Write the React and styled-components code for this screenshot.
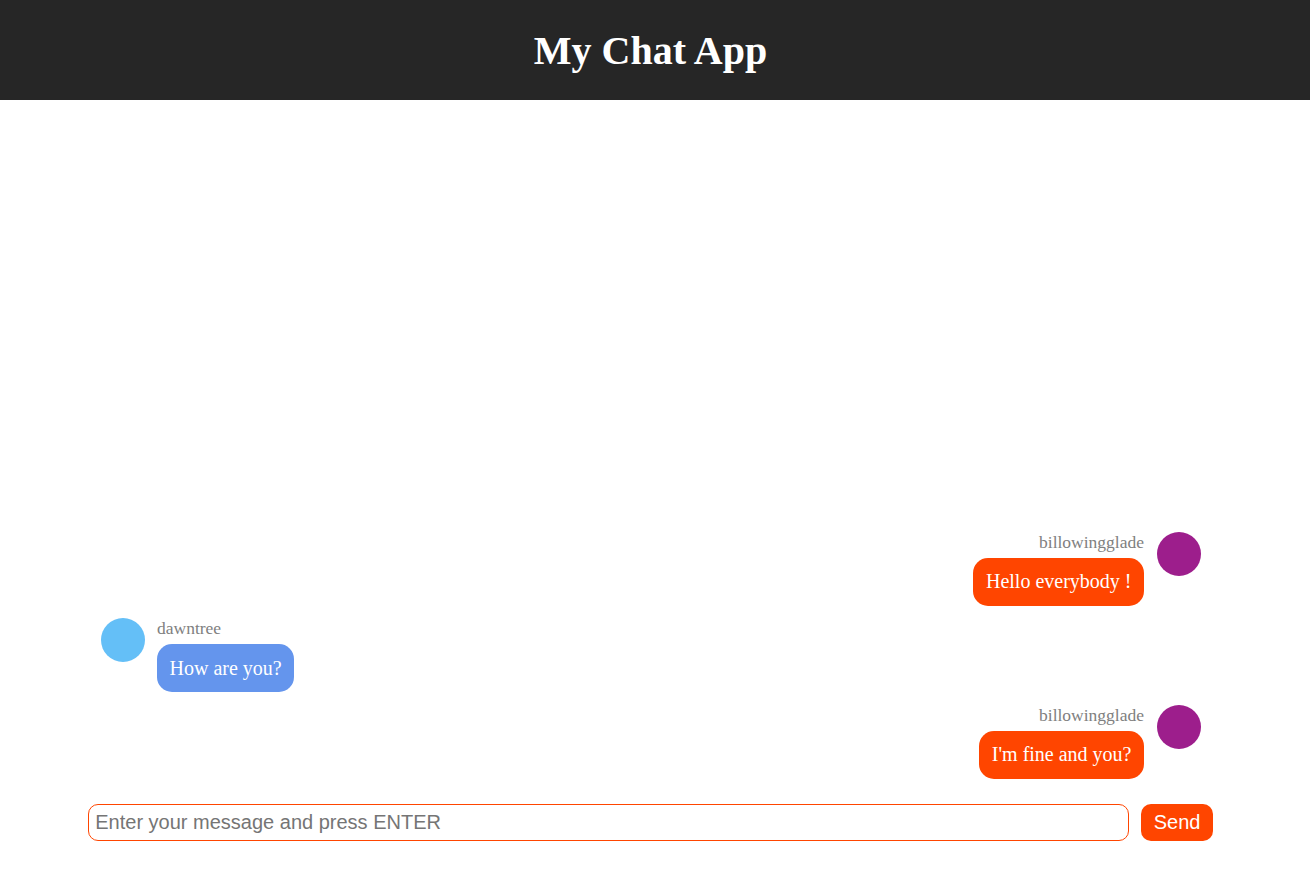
import React, { useState } from 'react';
import styled, { createGlobalStyle } from 'styled-components';

const GlobalStyle = createGlobalStyle`
  body {
    margin: 0;
    font-family: "Liberation Serif", "Times New Roman", serif;
    font-size: 20px;
  }
`;

const initialMessages = [
  { id: 1, member: { username: 'billowingglade', color: '#9d1e8c' }, text: 'Hello everybody !', mine: true },
  { id: 2, member: { username: 'dawntree', color: '#64bff7' }, text: 'How are you?', mine: false },
  { id: 3, member: { username: 'billowingglade', color: '#9d1e8c' }, text: "I'm fine and you?", mine: true },
];

const App = () => {
  const [messages, setMessages] = useState(initialMessages);
  const [text, setText] = useState('');

  const onSubmit = (e) => {
    e.preventDefault();
    if (!text) return;
    setMessages([
      ...messages,
      { id: messages.length + 1, member: { username: 'billowingglade', color: '#9d1e8c' }, text, mine: true },
    ]);
    setText('');
  };

  return (
    <Page>
      <GlobalStyle />
      <Header>
        <Title>My Chat App</Title>
      </Header>

      <Main>
        <MessagesList>
          {messages.map((m) => (
            <Message key={m.id} mine={m.mine}>
              <Avatar color={m.member.color} />
              <Content>
                <Username>{m.member.username}</Username>
                <Bubble mine={m.mine}>{m.text}</Bubble>
              </Content>
            </Message>
          ))}
        </MessagesList>

        <Form onSubmit={onSubmit}>
          <Input
            type="text"
            placeholder="Enter your message and press ENTER"
            value={text}
            onChange={(e) => setText(e.target.value)}
          />
          <SendButton type="submit">Send</SendButton>
        </Form>
      </Main>
    </Page>
  );
};

const Page = styled.div`
  display: flex;
  flex-direction: column;
  height: 100vh;
`;

const Header = styled.header`
  background-color: #262626;
  height: 100px;
  flex-shrink: 0;
  display: flex;
  align-items: center;
  justify-content: center;
  padding-right: 9px;
  color: white;
`;

const Title = styled.h1`
  margin: 0;
  font-size: 40px;
  font-weight: bold;
`;

const Main = styled.main`
  flex-grow: 1;
  min-height: 0;
  display: flex;
  flex-direction: column;
  padding-right: 9px;
`;

const MessagesList = styled.ul`
  list-style: none;
  margin: 0 auto;
  padding: 25px 0;
  max-width: 1125px;
  width: 100%;
  flex-grow: 1;
  overflow: auto;
  display: flex;
  flex-direction: column;
  justify-content: flex-end;
  box-sizing: border-box;
`;

const Message = styled.li.withConfig({ shouldForwardProp: (p) => p !== 'mine' })`
  display: flex;
  margin-top: 12.5px;
  flex-direction: ${(p) => (p.mine ? 'row-reverse' : 'row')};
  text-align: ${(p) => (p.mine ? 'right' : 'left')};
`;

const Avatar = styled.span`
  height: 44px;
  width: 44px;
  border-radius: 50%;
  display: inline-block;
  margin: 0 12.5px -12.5px;
  background-color: ${(p) => p.color};
  flex-shrink: 0;
`;

const Content = styled.div`
  display: inline-block;
`;

const Username = styled.span`
  display: block;
  color: gray;
  font-size: 17.5px;
  padding-bottom: 5px;
`;

const Bubble = styled.p.withConfig({ shouldForwardProp: (p) => p !== 'mine' })`
  display: inline-block;
  margin: 0;
  padding: 12.5px;
  max-width: 500px;
  border-radius: 15px;
  color: white;
  background-color: ${(p) => (p.mine ? 'orangered' : 'cornflowerblue')};
`;

const Form = styled.form`
  display: flex;
  justify-content: space-between;
  width: 100%;
  max-width: 1125px;
  margin: 0 auto 37px;
  flex-shrink: 0;
`;

const Input = styled.input`
  flex-grow: 1;
  padding: 6.25px;
  font-size: 20px;
  font-family: "Liberation Sans", Arial, sans-serif;
  border-radius: 10px;
  border: 1px solid orangered;
  outline: none;

  &::placeholder {
    color: #757575;
  }
`;

const SendButton = styled.button`
  padding: 6.25px 12.5px;
  font-size: 20px;
  font-family: "Liberation Sans", Arial, sans-serif;
  background-color: orangered;
  color: white;
  border: none;
  border-radius: 10px;
  margin-left: 12.5px;
  cursor: pointer;
`;

export default App;
